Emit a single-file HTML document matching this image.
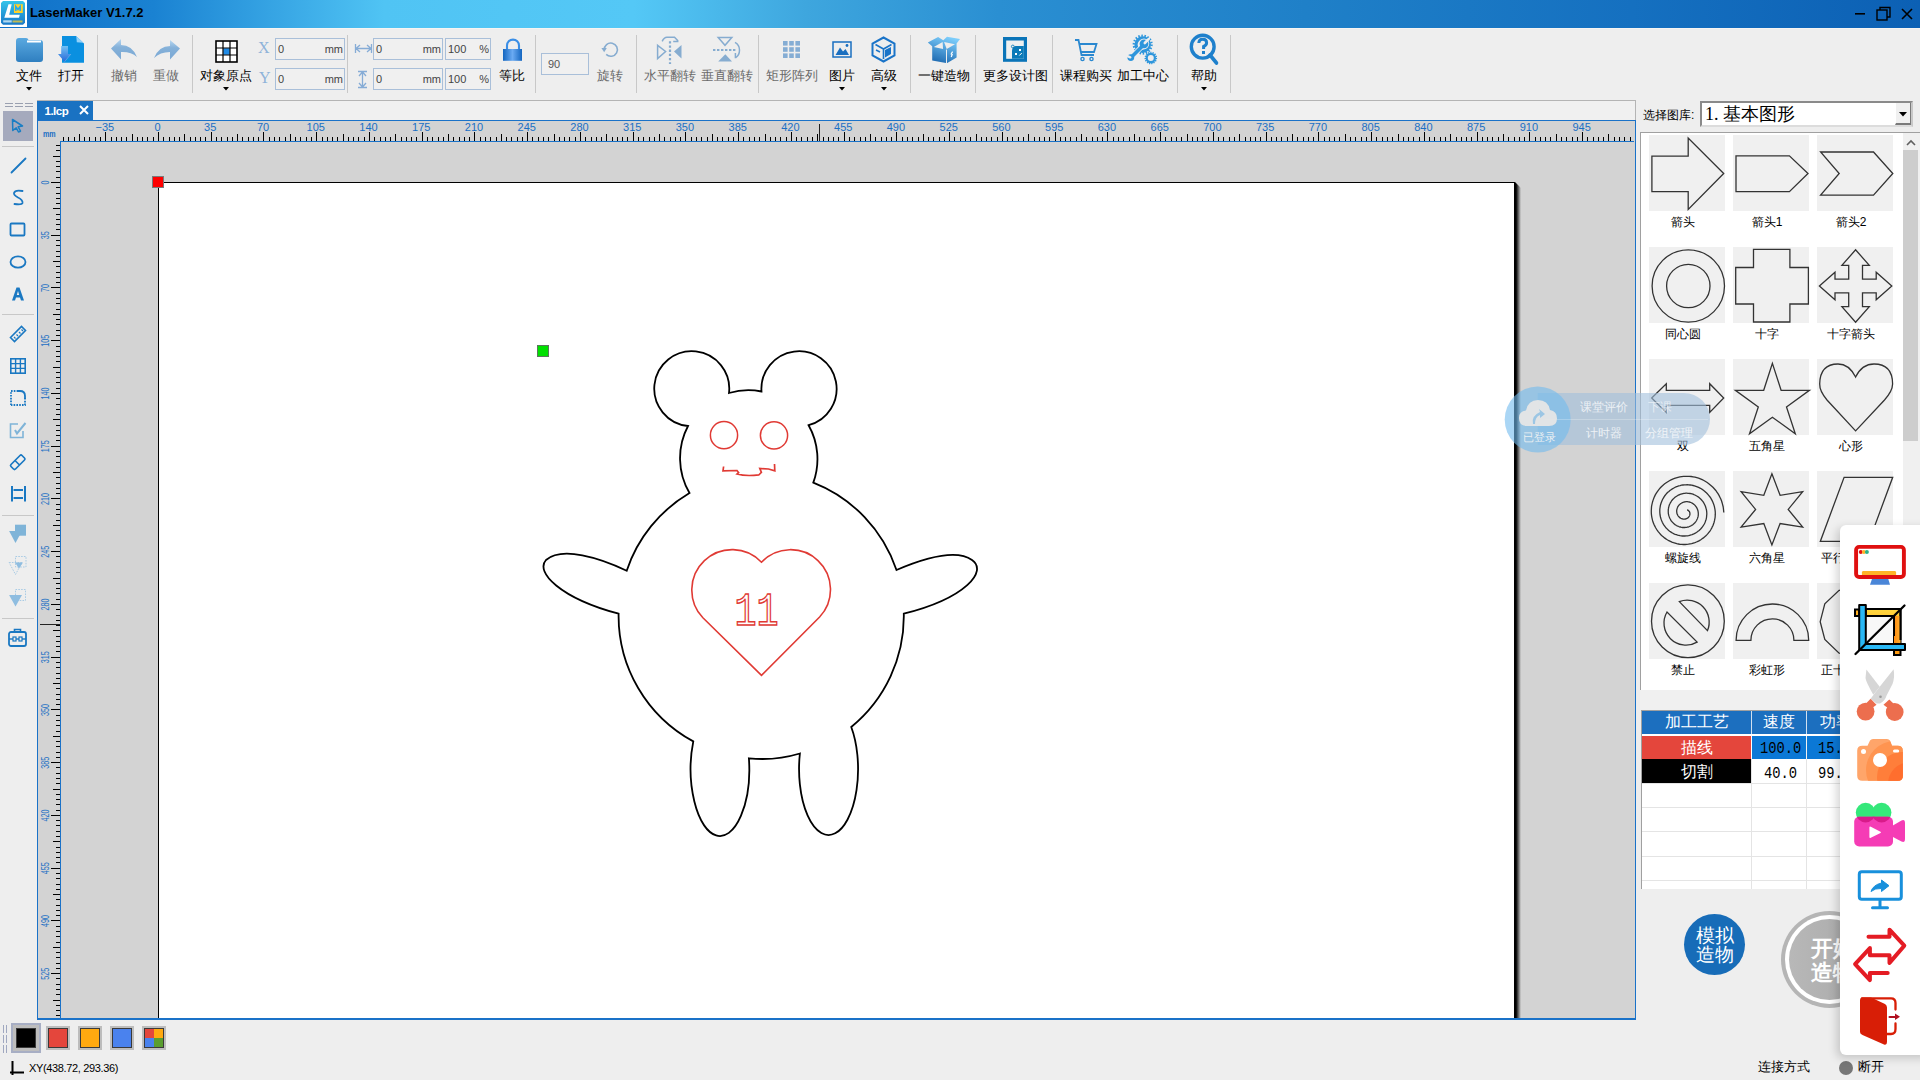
<!DOCTYPE html><html><head><meta charset="utf-8"><style>
*{margin:0;padding:0;box-sizing:border-box}
html,body{width:1920px;height:1080px;overflow:hidden;background:#eeeeee;font-family:"Liberation Sans",sans-serif;position:relative}
.abs{position:absolute}
.t{position:absolute;white-space:nowrap;font-size:13px;line-height:13px;color:#000}
svg{position:absolute;overflow:visible}
</style></head><body>
<div class="abs" style="left:0;top:0;width:1920px;height:28px;background:linear-gradient(90deg,#1070c8 0%,#1a82d2 8%,#50c4f4 20%,#54c8f6 33%,#3ea6de 42%,#2a8fd2 52%,#1f80c8 68%,#1570c0 85%,#0c60b4 100%)"></div>
<div class="abs" style="left:0;top:0;width:27px;height:27px;background:#fff"></div>
<svg style="left:0;top:0" width="27" height="27" viewBox="0 0 27 27">
<defs><linearGradient id="lg" x1="0" y1="0" x2="0" y2="1"><stop offset="0" stop-color="#34c4ea"/><stop offset="1" stop-color="#1878c8"/></linearGradient></defs>
<path d="M3 1 H23 L25 3 V22.7 L23 24.7 H3 L1 22.7 V3 Z" fill="url(#lg)"/>
<path d="M8.5 4.2 H11.7 L9.2 14.8 H19.8 L19 17.8 H4.3 Z" fill="#fff"/>
<rect x="14" y="4.2" width="8.8" height="8.8" fill="#ffd028"/>
<path d="M15.8 11 V6.5 L18 9.5 L20.2 6.5 V11" stroke="#22a8f0" stroke-width="1.5" fill="none"/>
<rect x="3.2" y="20.3" width="8.5" height="2.2" fill="#d8eef8" opacity="0.8"/><rect x="12.5" y="20.5" width="10" height="2" fill="#e8c838" opacity="0.8"/>
</svg>
<div class="t" style="left:30px;top:5px;font-size:13px;font-weight:bold;line-height:16px;color:#000;letter-spacing:0px">LaserMaker V1.7.2</div>
<svg style="left:1850px;top:6px" width="70" height="16" viewBox="0 0 70 16">
<rect x="5" y="7" width="10" height="1.6" fill="#000"/>
<rect x="27" y="4" width="10" height="10" fill="none" stroke="#000" stroke-width="1.4"/>
<path d="M30 4 V1.5 H40 V11 H37" fill="none" stroke="#000" stroke-width="1.4"/>
<path d="M52 3 L62 13 M62 3 L52 13" stroke="#000" stroke-width="1.6"/>
</svg>
<div class="abs" style="left:0;top:28px;width:1920px;height:1px;background:#f6f4f2"></div><div class="abs" style="left:97px;top:35px;width:1px;height:58px;background:#c8c8c8"></div><div class="abs" style="left:192px;top:35px;width:1px;height:58px;background:#c8c8c8"></div><div class="abs" style="left:347px;top:35px;width:1px;height:58px;background:#c8c8c8"></div><div class="abs" style="left:535px;top:35px;width:1px;height:58px;background:#c8c8c8"></div><div class="abs" style="left:636px;top:35px;width:1px;height:58px;background:#c8c8c8"></div><div class="abs" style="left:758px;top:35px;width:1px;height:58px;background:#c8c8c8"></div><div class="abs" style="left:910px;top:35px;width:1px;height:58px;background:#c8c8c8"></div><div class="abs" style="left:975px;top:35px;width:1px;height:58px;background:#c8c8c8"></div><div class="abs" style="left:1052px;top:35px;width:1px;height:58px;background:#c8c8c8"></div><div class="abs" style="left:1177px;top:35px;width:1px;height:58px;background:#c8c8c8"></div><div class="abs" style="left:1230px;top:35px;width:1px;height:58px;background:#c8c8c8"></div><div class="t" style="left:-31.0px;top:69px;width:120px;text-align:center;font-size:13px;line-height:13px;color:#000;">文件</div><svg style="left:25.5px;top:87px" width="6" height="4"><path d="M0 0 H6 L3 3.5 Z" fill="#000"/></svg><div class="t" style="left:11.0px;top:69px;width:120px;text-align:center;font-size:13px;line-height:13px;color:#000;">打开</div><div class="t" style="left:63.5px;top:69px;width:120px;text-align:center;font-size:13px;line-height:13px;color:#6a6a6a;">撤销</div><div class="t" style="left:106.0px;top:69px;width:120px;text-align:center;font-size:13px;line-height:13px;color:#6a6a6a;">重做</div><div class="t" style="left:166.0px;top:69px;width:120px;text-align:center;font-size:13px;line-height:13px;color:#000;">对象原点</div><svg style="left:222.5px;top:87px" width="6" height="4"><path d="M0 0 H6 L3 3.5 Z" fill="#000"/></svg><div class="t" style="left:452.0px;top:69px;width:120px;text-align:center;font-size:13px;line-height:13px;color:#000;">等比</div><div class="t" style="left:550.0px;top:69px;width:120px;text-align:center;font-size:13px;line-height:13px;color:#6a6a6a;">旋转</div><div class="t" style="left:609.5px;top:69px;width:120px;text-align:center;font-size:13px;line-height:13px;color:#6a6a6a;">水平翻转</div><div class="t" style="left:667.0px;top:69px;width:120px;text-align:center;font-size:13px;line-height:13px;color:#6a6a6a;">垂直翻转</div><div class="t" style="left:731.5px;top:69px;width:120px;text-align:center;font-size:13px;line-height:13px;color:#6a6a6a;">矩形阵列</div><div class="t" style="left:782.0px;top:69px;width:120px;text-align:center;font-size:13px;line-height:13px;color:#000;">图片</div><svg style="left:838.5px;top:87px" width="6" height="4"><path d="M0 0 H6 L3 3.5 Z" fill="#000"/></svg><div class="t" style="left:824.0px;top:69px;width:120px;text-align:center;font-size:13px;line-height:13px;color:#000;">高级</div><svg style="left:880.5px;top:87px" width="6" height="4"><path d="M0 0 H6 L3 3.5 Z" fill="#000"/></svg><div class="t" style="left:883.5px;top:69px;width:120px;text-align:center;font-size:13px;line-height:13px;color:#000;">一键造物</div><div class="t" style="left:955.0px;top:69px;width:120px;text-align:center;font-size:13px;line-height:13px;color:#000;">更多设计图</div><div class="t" style="left:1026.0px;top:69px;width:120px;text-align:center;font-size:13px;line-height:13px;color:#000;">课程购买</div><div class="t" style="left:1083.0px;top:69px;width:120px;text-align:center;font-size:13px;line-height:13px;color:#000;">加工中心</div><div class="t" style="left:1143.5px;top:69px;width:120px;text-align:center;font-size:13px;line-height:13px;color:#000;">帮助</div><svg style="left:1200.5px;top:87px" width="6" height="4"><path d="M0 0 H6 L3 3.5 Z" fill="#000"/></svg><svg style="left:15px;top:37px" width="29" height="26" viewBox="0 0 29 26">
<defs><linearGradient id="fg" x1="0" y1="0" x2="0" y2="1"><stop offset="0" stop-color="#5aa9e0"/><stop offset="1" stop-color="#2f7fc0"/></linearGradient></defs>
<path d="M1 4 Q1 1 4 1 H11 Q13 1 13.5 3 H25 Q28 3 28 6 V22 Q28 25 25 25 H4 Q1 25 1 22 Z" fill="url(#fg)"/>
<rect x="12" y="3.5" width="14" height="2" fill="#fff"/>
</svg><svg style="left:50px;top:30px" width="40" height="40" viewBox="0 0 40 40">
<defs><linearGradient id="oa" x1="0" y1="0" x2="0" y2="1"><stop offset="0" stop-color="#70c0f4"/><stop offset="1" stop-color="#2868d8"/></linearGradient></defs>
<path d="M12 5.9 H26 L34 13.5 V32.8 H12 Z" fill="#0a90e0"/>
<path d="M26.3 6.3 L26.8 12.3 L33.6 12.8 Z" fill="#92d2fa"/>
<path d="M11.2 16 H18 V24 H21 L14.5 31.8 L8 24 H11.2 Z" fill="url(#oa)"/>
<path d="M21 24 L14.5 31.8" stroke="#9ccdf2" stroke-width="0.6" opacity="0.7"/>
</svg><svg style="left:110px;top:38px" width="29" height="23" viewBox="0 0 29 23">
<defs><linearGradient id="ug" x1="0" y1="0" x2="0" y2="1"><stop offset="0" stop-color="#b8d8f2"/><stop offset="0.4" stop-color="#85b1d9"/><stop offset="1" stop-color="#7aa8d4"/></linearGradient></defs>
<path d="M1 10.5 L11 1 V7 Q22 7 27 19 Q21 13.5 11 14 V21.5 Z" fill="url(#ug)"/>
</svg>
<svg style="left:152px;top:38px" width="29" height="23" viewBox="0 0 29 23">
<path d="M28 10.5 L18 2 V8 Q7 8 2 20 Q8 14 18 14 V21.5 Z" fill="url(#ug)"/>
</svg><svg style="left:215px;top:40px" width="23" height="23" viewBox="0 0 23 23">
<rect x="1" y="1" width="21" height="21" fill="#fff" stroke="#000" stroke-width="1.6"/>
<rect x="8.2" y="8.2" width="6.6" height="6.6" fill="#1e8ae6"/>
<path d="M8 1 V22 M15 1 V22 M1 8 H22 M1 15 H22" stroke="#000" stroke-width="1.2"/>
</svg><div class="t" style="left:258px;top:40px;font-family:&quot;Liberation Serif&quot;,serif;font-size:16px;line-height:16px;color:#8fb3d9">X</div><div class="t" style="left:259px;top:70px;font-family:&quot;Liberation Serif&quot;,serif;font-size:16px;line-height:16px;color:#8fb3d9">Y</div><div class="abs" style="left:275px;top:38px;width:70px;height:22px;border:1px solid #a9bfd9;background:#f0f0f0"></div><div class="t" style="left:278px;top:44px;font-size:11px;line-height:11px;color:#444">0</div><div class="t" style="left:275px;width:68px;text-align:right;top:44px;font-size:11px;line-height:11px;color:#444">mm</div><div class="abs" style="left:275px;top:68px;width:70px;height:22px;border:1px solid #a9bfd9;background:#f0f0f0"></div><div class="t" style="left:278px;top:74px;font-size:11px;line-height:11px;color:#444">0</div><div class="t" style="left:275px;width:68px;text-align:right;top:74px;font-size:11px;line-height:11px;color:#444">mm</div><div class="abs" style="left:373px;top:38px;width:70px;height:22px;border:1px solid #a9bfd9;background:#f0f0f0"></div><div class="t" style="left:376px;top:44px;font-size:11px;line-height:11px;color:#444">0</div><div class="t" style="left:373px;width:68px;text-align:right;top:44px;font-size:11px;line-height:11px;color:#444">mm</div><div class="abs" style="left:373px;top:68px;width:70px;height:22px;border:1px solid #a9bfd9;background:#f0f0f0"></div><div class="t" style="left:376px;top:74px;font-size:11px;line-height:11px;color:#444">0</div><div class="t" style="left:373px;width:68px;text-align:right;top:74px;font-size:11px;line-height:11px;color:#444">mm</div><div class="abs" style="left:445px;top:38px;width:46px;height:22px;border:1px solid #a9bfd9;background:#f0f0f0"></div><div class="t" style="left:448px;top:44px;font-size:11px;line-height:11px;color:#444">100</div><div class="t" style="left:445px;width:44px;text-align:right;top:44px;font-size:11px;line-height:11px;color:#444">%</div><div class="abs" style="left:445px;top:68px;width:46px;height:22px;border:1px solid #a9bfd9;background:#f0f0f0"></div><div class="t" style="left:448px;top:74px;font-size:11px;line-height:11px;color:#444">100</div><div class="t" style="left:445px;width:44px;text-align:right;top:74px;font-size:11px;line-height:11px;color:#444">%</div><div class="abs" style="left:541px;top:53px;width:48px;height:22px;border:1px solid #a9bfd9;background:#f0f0f0"></div><div class="t" style="left:544px;top:59px;font-size:11px;line-height:11px;color:#444"></div><div class="t" style="left:548px;top:59px;font-size:11px;line-height:11px;color:#555">90</div><svg style="left:354px;top:43px" width="19" height="11" viewBox="0 0 19 11">
<path d="M1.5 1 V10 M17.5 1 V10 M2 5.5 H17 M2 5.5 L6 2 M2 5.5 L6 9 M17 5.5 L13 2 M17 5.5 L13 9" stroke="#86acd6" stroke-width="1.3" fill="none"/>
</svg>
<svg style="left:357px;top:70px" width="11" height="19" viewBox="0 0 11 19">
<path d="M1 1.5 H10 M1 17.5 H10 M5.5 2 V17 M5.5 2 L2 6 M5.5 2 L9 6 M5.5 17 L2 13 M5.5 17 L9 13" stroke="#86acd6" stroke-width="1.3" fill="none"/>
</svg><svg style="left:502px;top:38px" width="21" height="24" viewBox="0 0 21 24">
<defs><linearGradient id="lk" x1="0" y1="0" x2="1" y2="0"><stop offset="0" stop-color="#1466c0"/><stop offset="0.5" stop-color="#6aaaf2"/><stop offset="1" stop-color="#1466c0"/></linearGradient></defs>
<path d="M5 11.5 V7.6 A6 6 0 0 1 17 7.6 V11.5" stroke="#3a8ee6" stroke-width="2.1" fill="none"/>
<rect x="1" y="11" width="19" height="11.8" fill="url(#lk)"/>
</svg><svg style="left:600px;top:40px" width="20" height="18" viewBox="0 0 20 18">
<path d="M4.2 10 A6.6 6.6 0 1 1 6.2 14.4" stroke="#86acd0" stroke-width="1.6" fill="none"/>
<path d="M1.4 8 L6.8 8 L4.2 12.2 Z" fill="#86acd0"/>
</svg><svg style="left:650px;top:32px" width="100" height="36" viewBox="0 0 100 36">
<g stroke="#86acd0" fill="none" stroke-width="1.5">
<path d="M20 9.2 V32" stroke-width="2.2" stroke-dasharray="2.3 1.9"/>
<path d="M7.6 13.3 L15.6 19.5 L7.6 26.6 Z"/>
<path d="M12.2 9.4 Q14 5.2 17 5.2 H24.5 L27.7 8.6 V9.4 H23.2"/>
<path d="M63 18 H86" stroke-width="2.2" stroke-dasharray="2.4 1.6"/>
<path d="M68.2 5.5 H81.8 L75 13.3 Z"/>
<path d="M85 10.4 Q89.5 13 89.5 18 Q89.5 23 86 25.5 H85.4 V21"/>
</g>
<path d="M31.5 13 L24 19.5 L31.5 26.6 Z" fill="#86acd0"/>
<path d="M68.2 29.5 H82 L75.3 22.3 Z" fill="#86acd0"/>
</svg><svg style="left:783px;top:41px" width="18" height="18" viewBox="0 0 18 18" fill="#85add4">
<rect x="0" y="0" width="4.6" height="4.6"/><rect x="6.2" y="0" width="4.6" height="4.6"/><rect x="12.4" y="0" width="4.6" height="4.6"/>
<rect x="0" y="6.2" width="4.6" height="4.6"/><rect x="6.2" y="6.2" width="4.6" height="4.6"/><rect x="12.4" y="6.2" width="4.6" height="4.6"/>
<rect x="0" y="12.4" width="4.6" height="4.6"/><rect x="6.2" y="12.4" width="4.6" height="4.6"/><rect x="12.4" y="12.4" width="4.6" height="4.6"/>
</svg><svg style="left:832px;top:41px" width="20" height="17" viewBox="0 0 20 17">
<rect x="1" y="1" width="18" height="15" fill="none" stroke="#1a6fc0" stroke-width="1.5"/>
<path d="M3.5 14 L8 6.5 L11 10.5 L13.5 8 L17 14 Z" fill="#1a6fc0"/>
<circle cx="15" cy="4.5" r="1.4" fill="#1a6fc0"/>
</svg><svg style="left:871px;top:36px" width="25" height="27" viewBox="0 0 25 27">
<path d="M12.5 1.5 L23.5 7.5 V19.5 L12.5 25.5 L1.5 19.5 V7.5 Z" stroke="#1a74c8" stroke-width="2" fill="none"/>
<path d="M4.5 8.5 L12.5 13 L20.5 8.5 M12.5 13 V23" stroke="#1a74c8" stroke-width="1.6" fill="none"/>
<path d="M14 14 L20 11 V18 L14 21.5 Z" fill="#1a74c8"/>
<path d="M5 14 L9 16" stroke="#1a74c8" stroke-width="1.4"/>
</svg><svg style="left:920px;top:30px" width="50" height="40" viewBox="0 0 50 40">
<defs><linearGradient id="bx" x1="0.6" y1="0" x2="0.2" y2="1"><stop offset="0" stop-color="#7ccdfb"/><stop offset="1" stop-color="#1a66ae"/></linearGradient></defs>
<path d="M7.8 12.4 L18.1 6.9 L23.3 10.3 L27 6.7 L40 9 L36.6 13.6 V27.5 L27.3 33 L26 33 L12.2 30.6 V16.2 Z" fill="url(#bx)"/>
<path d="M13.8 17.1 L22.6 12 L23.1 18.9 Z" fill="#eeeeee"/>
<path d="M24.1 12 L35 14.3 L26.7 19.1 Z" fill="#eeeeee"/>
<path d="M26.5 19.6 V33.5" stroke="#eeeeee" stroke-width="1"/>
<path d="M32.6 21.6 L31.2 24 L32.2 24.6 L31.2 27" stroke="#fff" stroke-width="1.2" fill="none"/>
</svg><svg style="left:998px;top:32px" width="34" height="34" viewBox="0 0 34 34">
<rect x="5" y="5" width="24" height="24.8" fill="#0a74b8"/>
<rect x="8.2" y="8.5" width="17.6" height="18.3" fill="#eef0f0"/>
<path d="M17.5 14 H25.8 V26.8 H14 V19 Q14 15.2 17.5 14 Z" fill="#0b7ab8"/>
<circle cx="14.8" cy="14.5" r="1.4" fill="none" stroke="#0b7ab8" stroke-width="0.9"/>
<rect x="21" y="17" width="2" height="2" fill="#fff"/><rect x="17" y="21" width="2" height="2" fill="#fff"/>
<path d="M21.3 23.5 L23.8 21" stroke="#fff" stroke-width="1"/>
</svg><svg style="left:1074px;top:38px" width="24" height="24" viewBox="0 0 24 24">
<path d="M1 2 H4.5 L7.5 17 H20" stroke="#2a88d0" stroke-width="1.8" fill="none"/>
<path d="M5 6 H22.5 L20 14 H7" stroke="#2a88d0" stroke-width="1.8" fill="none"/>
<circle cx="8.5" cy="21" r="1.6" stroke="#2a88d0" stroke-width="1.4" fill="none"/>
<circle cx="17.5" cy="21" r="1.6" stroke="#2a88d0" stroke-width="1.4" fill="none"/>
</svg><svg style="left:1120px;top:30px" width="45" height="40" viewBox="0 0 45 40">
<circle cx="22.7" cy="14.6" r="8.9" stroke="#2e96dc" stroke-width="2.3" stroke-dasharray="1.5 1.6" fill="none"/>
<circle cx="22.7" cy="14.6" r="6.7" stroke="#2e96dc" stroke-width="3.2" fill="none"/>
<g stroke="#eeeeee" stroke-width="1.6" fill="#eeeeee">
<path d="M22.5 16 L11.3 27.2" stroke-width="5.2" stroke-linecap="round"/>
<circle cx="24" cy="13.8" r="5.2" stroke="none"/>
</g>
<path d="M22.5 16 L11.3 27.2" stroke="#2e96dc" stroke-width="3.6" stroke-linecap="round"/>
<circle cx="24" cy="13.8" r="4.4" fill="#2e96dc"/>
<circle cx="10.8" cy="27.6" r="3.4" fill="#2e96dc"/>
<path d="M24.8 13 L28.6 9.2" stroke="#eeeeee" stroke-width="2.6" stroke-linecap="round"/>
<path d="M10.3 27.3 L6.4 25.6" stroke="#eeeeee" stroke-width="2.4" stroke-linecap="round"/>
<circle cx="30.8" cy="28" r="5.5" stroke="#2e96dc" stroke-width="1.6" stroke-dasharray="1.2 1.05" fill="none"/>
<circle cx="30.8" cy="28" r="4.1" stroke="#2e96dc" stroke-width="2.2" fill="none"/>
</svg><svg style="left:1189px;top:33px" width="30" height="34" viewBox="0 0 30 34">
<circle cx="13.7" cy="13.7" r="11.4" stroke="#1e80cc" stroke-width="3.4" fill="none"/>
<path d="M21 22 L27.5 30" stroke="#1e80cc" stroke-width="3.6" stroke-linecap="round"/>
<path d="M9.8 10 Q10 6.3 13.8 6.3 Q17.6 6.3 17.6 9.8 Q17.6 12.4 14.6 13.5 V16" stroke="#1e80cc" stroke-width="3" fill="none"/>
<rect x="13" y="18" width="3" height="3" fill="#1e80cc"/>
</svg><svg style="left:5px;top:103px" width="29" height="5" viewBox="0 0 29 5"><path d="M0 0.5 H8 M10 0.5 H18 M20 0.5 H28 M0 3.5 H8 M10 3.5 H18 M20 3.5 H28" stroke="#9aa0b0" stroke-width="1"/></svg><div class="abs" style="left:3px;top:111px;width:30px;height:30px;background:#a5aabd"></div><svg style="left:11px;top:118px" width="13" height="15" viewBox="0 0 13 15"><path d="M1.5 1.5 L11.5 8 L7.2 8.8 L9.5 13.2 L7.5 14 L5.2 9.8 L1.8 12.5 Z" stroke="#1a7ec4" stroke-width="1.5" fill="none" stroke-linejoin="round"/></svg><div class="abs" style="left:2px;top:146px;width:32px;height:1px;background:#c8c8c8"></div><div class="abs" style="left:2px;top:314px;width:32px;height:1px;background:#c8c8c8"></div><div class="abs" style="left:2px;top:515px;width:32px;height:1px;background:#c8c8c8"></div><div class="abs" style="left:2px;top:618px;width:32px;height:1px;background:#c8c8c8"></div><svg style="left:10px;top:157px" width="17" height="17" viewBox="0 0 17 17"><path d="M1.5 15.5 L15.5 1.5" stroke="#1a78c2" stroke-width="1.8" stroke-linecap="round"/></svg><svg style="left:12px;top:189px" width="13" height="17" viewBox="0 0 13 17"><path d="M10.5 2 Q3 0.5 2 4 Q1.5 6 6 8.5 Q11 11 10.5 14 Q10 16 2.5 15" stroke="#1a78c2" stroke-width="1.8" fill="none" stroke-linecap="round"/></svg><svg style="left:9px;top:222px" width="17" height="15" viewBox="0 0 17 15"><rect x="1.5" y="1.5" width="14" height="12" rx="1" stroke="#1a78c2" stroke-width="1.8" fill="none"/></svg><svg style="left:9px;top:255px" width="18" height="14" viewBox="0 0 18 14"><ellipse cx="9" cy="7" rx="7.5" ry="5.7" stroke="#1a78c2" stroke-width="1.8" fill="none"/></svg><svg style="left:11px;top:287px" width="14" height="14" viewBox="0 0 14 14"><path d="M1 13.5 L5.5 0.5 H8.5 L13 13.5 H10 L9 10.5 H5 L4 13.5 Z M5.8 8 H8.2 L7 4 Z" fill="#1a78c2" fill-rule="evenodd"/></svg><svg style="left:9px;top:325px" width="18" height="18" viewBox="0 0 18 18"><path d="M1.5 12.5 L12.5 1.5 L16.5 5.5 L5.5 16.5 Z" stroke="#1a78c2" stroke-width="1.6" fill="none"/><path d="M5 12 L6.5 13.5 M7.5 9.5 L9 11 M10 7 L11.5 8.5 M12.5 4.5 L14 6" stroke="#1a78c2" stroke-width="1.2"/></svg><svg style="left:10px;top:358px" width="16" height="16" viewBox="0 0 16 16"><rect x="0.8" y="0.8" width="14.4" height="14.4" stroke="#1a78c2" stroke-width="1.6" fill="none"/><path d="M5.6 1 V15 M10.4 1 V15 M1 5.6 H15 M1 10.4 H15" stroke="#1a78c2" stroke-width="1.4"/></svg><svg style="left:10px;top:390px" width="16" height="16" viewBox="0 0 16 16"><path d="M1 15 V1 H8 M15 8 V15 H1" stroke="#1a78c2" stroke-width="1.8" fill="none" stroke-dasharray="1.6 1.2"/><path d="M7 1 H10 Q15 1 15 6 V9" stroke="#1a78c2" stroke-width="1.8" fill="none"/></svg><svg style="left:9px;top:421px" width="18" height="18" viewBox="0 0 18 18"><path d="M9 3 H1.5 V16.5 H14 V10" stroke="#7fb4d8" stroke-width="1.6" fill="none"/><path d="M6 9 L8 12.5 L16.5 2" stroke="#7fb4d8" stroke-width="2" fill="none"/></svg><svg style="left:9px;top:453px" width="18" height="18" viewBox="0 0 18 18"><path d="M2 11.5 L11 2.5 Q12 1.5 13 2.5 L15.5 5 Q16.5 6 15.5 7 L6.5 16 Q5.5 17 4.5 16 L2 13.5 Q1 12.5 2 11.5 Z M6 7.5 L10.5 12" stroke="#1a78c2" stroke-width="1.7" fill="none"/></svg><svg style="left:10px;top:485px" width="16" height="17" viewBox="0 0 16 17"><path d="M2 1 V16.5 M15 1 V16.5" stroke="#1a78c2" stroke-width="2"/><path d="M3.5 5 H13 M3.5 13 H13" stroke="#1a78c2" stroke-width="2"/></svg><svg style="left:8px;top:524px" width="20" height="21" viewBox="0 0 20 21"><rect x="7" y="0.7" width="11" height="11" fill="#7fb4d8"/><path d="M1.1 7 H14 L7.5 19 Z" fill="#7fb4d8"/></svg><svg style="left:8px;top:555px" width="20" height="21" viewBox="0 0 20 21"><rect x="7.5" y="1.5" width="10.5" height="10.5" stroke="#a9cbe4" stroke-width="1" fill="none" stroke-dasharray="1.6 1.2"/><path d="M1.1 7.5 H14 L7.5 19.5 Z" stroke="#a9cbe4" stroke-width="1" fill="none" stroke-dasharray="1.6 1.2"/><path d="M7 7.5 H15 L11 13.5 Z" fill="#8fbde0"/></svg><svg style="left:8px;top:588px" width="20" height="20" viewBox="0 0 20 20"><rect x="7.5" y="1.5" width="10" height="11" stroke="#a9cbe4" stroke-width="1" fill="none" stroke-dasharray="1.6 1.2"/><path d="M1.1 7 H14 L7.5 18.5 Z" fill="#8fbde0"/></svg><svg style="left:8px;top:628px" width="19" height="19" viewBox="0 0 19 19"><rect x="1" y="4" width="17" height="14" rx="2" stroke="#1a78c2" stroke-width="1.8" fill="none"/><path d="M6.5 4 V1.5 H12.5 V4" stroke="#1a78c2" stroke-width="1.6" fill="none"/><path d="M1 11 H18" stroke="#1a78c2" stroke-width="1.4"/><rect x="5" y="9" width="3" height="4" fill="#eee" stroke="#1a78c2" stroke-width="1.2"/><rect x="11" y="9" width="3" height="4" fill="#eee" stroke="#1a78c2" stroke-width="1.2"/></svg><div class="abs" style="left:37px;top:100px;width:1599px;height:20px;background:#f0f0f0;border-top:1px solid #b4b4b4;border-right:1px solid #b4b4b4"></div><div class="abs" style="left:37px;top:101px;width:56px;height:20px;background:#1a72c2"></div><div class="t" style="left:44.5px;top:106px;font-size:11.5px;line-height:11px;color:#fff;letter-spacing:-0.5px;font-weight:bold">1.lcp</div><svg style="left:79px;top:105px" width="10" height="10" viewBox="0 0 10 10"><path d="M1 1 L9 9 M9 1 L1 9" stroke="#fff" stroke-width="2"/></svg><div class="abs" style="left:37px;top:120px;width:1599px;height:900px;background:#d3d3d3;border:1px solid #1a72c8;border-bottom-width:2px"></div><div class="abs" style="left:60px;top:141px;width:1574px;height:1px;background:#1a72c8"></div><div class="abs" style="left:60px;top:141px;width:1px;height:878px;background:#1a72c8"></div><div class="t" style="left:42.5px;top:129px;font-size:9.5px;line-height:9px;color:#1a6fc4;transform:scaleX(0.75);transform-origin:0 0;font-weight:bold">mm</div><svg style="left:0;top:0" width="1920" height="1080" viewBox="0 0 1920 1080"><path d="M63.5 137V141M68.5 137V141M74.5 137V141M79.5 134V141M84.5 137V141M89.5 137V141M95.5 137V141M100.5 137V141M105.5 132V141M111.5 137V141M116.5 137V141M121.5 137V141M126.5 137V141M132.5 134V141M137.5 137V141M142.5 137V141M147.5 137V141M153.5 137V141M158.5 132V141M163.5 137V141M169.5 137V141M174.5 137V141M179.5 137V141M184.5 134V141M190.5 137V141M195.5 137V141M200.5 137V141M205.5 137V141M211.5 132V141M216.5 137V141M221.5 137V141M227.5 137V141M232.5 137V141M237.5 134V141M242.5 137V141M248.5 137V141M253.5 137V141M258.5 137V141M263.5 132V141M269.5 137V141M274.5 137V141M279.5 137V141M285.5 137V141M290.5 134V141M295.5 137V141M300.5 137V141M306.5 137V141M311.5 137V141M316.5 132V141M322.5 137V141M327.5 137V141M332.5 137V141M337.5 137V141M343.5 134V141M348.5 137V141M353.5 137V141M358.5 137V141M364.5 137V141M369.5 132V141M374.5 137V141M380.5 137V141M385.5 137V141M390.5 137V141M395.5 134V141M401.5 137V141M406.5 137V141M411.5 137V141M416.5 137V141M422.5 132V141M427.5 137V141M432.5 137V141M438.5 137V141M443.5 137V141M448.5 134V141M453.5 137V141M459.5 137V141M464.5 137V141M469.5 137V141M474.5 132V141M480.5 137V141M485.5 137V141M490.5 137V141M496.5 137V141M501.5 134V141M506.5 137V141M511.5 137V141M517.5 137V141M522.5 137V141M527.5 132V141M532.5 137V141M538.5 137V141M543.5 137V141M548.5 137V141M554.5 134V141M559.5 137V141M564.5 137V141M569.5 137V141M575.5 137V141M580.5 132V141M585.5 137V141M591.5 137V141M596.5 137V141M601.5 137V141M606.5 134V141M612.5 137V141M617.5 137V141M622.5 137V141M627.5 137V141M633.5 132V141M638.5 137V141M643.5 137V141M649.5 137V141M654.5 137V141M659.5 134V141M664.5 137V141M670.5 137V141M675.5 137V141M680.5 137V141M685.5 132V141M691.5 137V141M696.5 137V141M701.5 137V141M707.5 137V141M712.5 134V141M717.5 137V141M722.5 137V141M728.5 137V141M733.5 137V141M738.5 132V141M743.5 137V141M749.5 137V141M754.5 137V141M759.5 137V141M765.5 134V141M770.5 137V141M775.5 137V141M780.5 137V141M786.5 137V141M791.5 132V141M796.5 137V141M801.5 137V141M807.5 137V141M812.5 137V141M817.5 134V141M823.5 137V141M828.5 137V141M833.5 137V141M838.5 137V141M844.5 132V141M849.5 137V141M854.5 137V141M860.5 137V141M865.5 137V141M870.5 134V141M875.5 137V141M881.5 137V141M886.5 137V141M891.5 137V141M896.5 132V141M902.5 137V141M907.5 137V141M912.5 137V141M918.5 137V141M923.5 134V141M928.5 137V141M933.5 137V141M939.5 137V141M944.5 137V141M949.5 132V141M954.5 137V141M960.5 137V141M965.5 137V141M970.5 137V141M976.5 134V141M981.5 137V141M986.5 137V141M991.5 137V141M997.5 137V141M1002.5 132V141M1007.5 137V141M1012.5 137V141M1018.5 137V141M1023.5 137V141M1028.5 134V141M1034.5 137V141M1039.5 137V141M1044.5 137V141M1049.5 137V141M1055.5 132V141M1060.5 137V141M1065.5 137V141M1070.5 137V141M1076.5 137V141M1081.5 134V141M1086.5 137V141M1092.5 137V141M1097.5 137V141M1102.5 137V141M1107.5 132V141M1113.5 137V141M1118.5 137V141M1123.5 137V141M1129.5 137V141M1134.5 134V141M1139.5 137V141M1144.5 137V141M1150.5 137V141M1155.5 137V141M1160.5 132V141M1165.5 137V141M1171.5 137V141M1176.5 137V141M1181.5 137V141M1187.5 134V141M1192.5 137V141M1197.5 137V141M1202.5 137V141M1208.5 137V141M1213.5 132V141M1218.5 137V141M1223.5 137V141M1229.5 137V141M1234.5 137V141M1239.5 134V141M1245.5 137V141M1250.5 137V141M1255.5 137V141M1260.5 137V141M1266.5 132V141M1271.5 137V141M1276.5 137V141M1281.5 137V141M1287.5 137V141M1292.5 134V141M1297.5 137V141M1303.5 137V141M1308.5 137V141M1313.5 137V141M1318.5 132V141M1324.5 137V141M1329.5 137V141M1334.5 137V141M1339.5 137V141M1345.5 134V141M1350.5 137V141M1355.5 137V141M1361.5 137V141M1366.5 137V141M1371.5 132V141M1376.5 137V141M1382.5 137V141M1387.5 137V141M1392.5 137V141M1398.5 134V141M1403.5 137V141M1408.5 137V141M1413.5 137V141M1419.5 137V141M1424.5 132V141M1429.5 137V141M1434.5 137V141M1440.5 137V141M1445.5 137V141M1450.5 134V141M1456.5 137V141M1461.5 137V141M1466.5 137V141M1471.5 137V141M1477.5 132V141M1482.5 137V141M1487.5 137V141M1492.5 137V141M1498.5 137V141M1503.5 134V141M1508.5 137V141M1514.5 137V141M1519.5 137V141M1524.5 137V141M1529.5 132V141M1535.5 137V141M1540.5 137V141M1545.5 137V141M1550.5 137V141M1556.5 134V141M1561.5 137V141M1566.5 137V141M1572.5 137V141M1577.5 137V141M1582.5 132V141M1587.5 137V141M1593.5 137V141M1598.5 137V141M1603.5 137V141M1608.5 134V141M1614.5 137V141M1619.5 137V141M1624.5 137V141M1630.5 137V141M56 145.5H60M56 150.5H60M53 156.5H60M56 161.5H60M56 166.5H60M56 171.5H60M56 177.5H60M51 182.5H60M56 187.5H60M56 193.5H60M56 198.5H60M56 203.5H60M53 208.5H60M56 214.5H60M56 219.5H60M56 224.5H60M56 229.5H60M51 235.5H60M56 240.5H60M56 245.5H60M56 251.5H60M56 256.5H60M53 261.5H60M56 266.5H60M56 272.5H60M56 277.5H60M56 282.5H60M51 287.5H60M56 293.5H60M56 298.5H60M56 303.5H60M56 309.5H60M53 314.5H60M56 319.5H60M56 324.5H60M56 330.5H60M56 335.5H60M51 340.5H60M56 346.5H60M56 351.5H60M56 356.5H60M56 361.5H60M53 367.5H60M56 372.5H60M56 377.5H60M56 382.5H60M56 388.5H60M51 393.5H60M56 398.5H60M56 404.5H60M56 409.5H60M56 414.5H60M53 419.5H60M56 425.5H60M56 430.5H60M56 435.5H60M56 440.5H60M51 446.5H60M56 451.5H60M56 456.5H60M56 462.5H60M56 467.5H60M53 472.5H60M56 477.5H60M56 483.5H60M56 488.5H60M56 493.5H60M51 498.5H60M56 504.5H60M56 509.5H60M56 514.5H60M56 520.5H60M53 525.5H60M56 530.5H60M56 535.5H60M56 541.5H60M56 546.5H60M51 551.5H60M56 556.5H60M56 562.5H60M56 567.5H60M56 572.5H60M53 578.5H60M56 583.5H60M56 588.5H60M56 593.5H60M56 599.5H60M51 604.5H60M56 609.5H60M56 615.5H60M56 620.5H60M56 625.5H60M53 630.5H60M56 636.5H60M56 641.5H60M56 646.5H60M56 651.5H60M51 657.5H60M56 662.5H60M56 667.5H60M56 673.5H60M56 678.5H60M53 683.5H60M56 688.5H60M56 694.5H60M56 699.5H60M56 704.5H60M51 709.5H60M56 715.5H60M56 720.5H60M56 725.5H60M56 731.5H60M53 736.5H60M56 741.5H60M56 746.5H60M56 752.5H60M56 757.5H60M51 762.5H60M56 767.5H60M56 773.5H60M56 778.5H60M56 783.5H60M53 789.5H60M56 794.5H60M56 799.5H60M56 804.5H60M56 810.5H60M51 815.5H60M56 820.5H60M56 825.5H60M56 831.5H60M56 836.5H60M53 841.5H60M56 847.5H60M56 852.5H60M56 857.5H60M56 862.5H60M51 868.5H60M56 873.5H60M56 878.5H60M56 884.5H60M56 889.5H60M53 894.5H60M56 899.5H60M56 905.5H60M56 910.5H60M56 915.5H60M51 920.5H60M56 926.5H60M56 931.5H60M56 936.5H60M56 942.5H60M53 947.5H60M56 952.5H60M56 957.5H60M56 963.5H60M56 968.5H60M51 973.5H60M56 978.5H60M56 984.5H60M56 989.5H60M56 994.5H60M53 1000.5H60M56 1005.5H60M56 1010.5H60M56 1015.5H60" stroke="#000" stroke-width="1"/><path d="M819.5 124V141M40 624.5H60" stroke="#222" stroke-width="1"/><g font-family="Liberation Sans" font-size="11" fill="#1a6fc4" text-anchor="middle"><text x="104.8" y="131">−35</text><text x="157.5" y="131">0</text><text x="210.2" y="131">35</text><text x="263.0" y="131">70</text><text x="315.7" y="131">105</text><text x="368.5" y="131">140</text><text x="421.2" y="131">175</text><text x="474.0" y="131">210</text><text x="526.7" y="131">245</text><text x="579.5" y="131">280</text><text x="632.2" y="131">315</text><text x="684.9" y="131">350</text><text x="737.7" y="131">385</text><text x="790.4" y="131">420</text><text x="843.2" y="131">455</text><text x="895.9" y="131">490</text><text x="948.7" y="131">525</text><text x="1001.4" y="131">560</text><text x="1054.2" y="131">595</text><text x="1106.9" y="131">630</text><text x="1159.7" y="131">665</text><text x="1212.4" y="131">700</text><text x="1265.1" y="131">735</text><text x="1317.9" y="131">770</text><text x="1370.6" y="131">805</text><text x="1423.4" y="131">840</text><text x="1476.1" y="131">875</text><text x="1528.9" y="131">910</text><text x="1581.6" y="131">945</text><text transform="translate(49,182.5) rotate(-90) scale(0.72,1)" x="0" y="0" font-size="10">0</text><text transform="translate(49,235.2) rotate(-90) scale(0.72,1)" x="0" y="0" font-size="10">35</text><text transform="translate(49,288.0) rotate(-90) scale(0.72,1)" x="0" y="0" font-size="10">70</text><text transform="translate(49,340.7) rotate(-90) scale(0.72,1)" x="0" y="0" font-size="10">105</text><text transform="translate(49,393.5) rotate(-90) scale(0.72,1)" x="0" y="0" font-size="10">140</text><text transform="translate(49,446.2) rotate(-90) scale(0.72,1)" x="0" y="0" font-size="10">175</text><text transform="translate(49,499.0) rotate(-90) scale(0.72,1)" x="0" y="0" font-size="10">210</text><text transform="translate(49,551.7) rotate(-90) scale(0.72,1)" x="0" y="0" font-size="10">245</text><text transform="translate(49,604.5) rotate(-90) scale(0.72,1)" x="0" y="0" font-size="10">280</text><text transform="translate(49,657.2) rotate(-90) scale(0.72,1)" x="0" y="0" font-size="10">315</text><text transform="translate(49,709.9) rotate(-90) scale(0.72,1)" x="0" y="0" font-size="10">350</text><text transform="translate(49,762.7) rotate(-90) scale(0.72,1)" x="0" y="0" font-size="10">385</text><text transform="translate(49,815.4) rotate(-90) scale(0.72,1)" x="0" y="0" font-size="10">420</text><text transform="translate(49,868.2) rotate(-90) scale(0.72,1)" x="0" y="0" font-size="10">455</text><text transform="translate(49,920.9) rotate(-90) scale(0.72,1)" x="0" y="0" font-size="10">490</text><text transform="translate(49,973.7) rotate(-90) scale(0.72,1)" x="0" y="0" font-size="10">525</text></g></svg><div class="abs" style="left:158px;top:182px;width:1356px;height:836px;background:#fff;border-top:1px solid #000;border-left:1px solid #000"></div><svg style="left:1514px;top:182px" width="8" height="836" viewBox="0 0 8 836"><defs><linearGradient id="shd" x1="0" y1="0" x2="1" y2="0"><stop offset="0" stop-color="#000"/><stop offset="0.3" stop-color="#000"/><stop offset="1" stop-color="#d3d3d3"/></linearGradient></defs><path d="M0 0 H1 L7 6 V836 H0 Z" fill="url(#shd)"/></svg><div class="abs" style="left:152px;top:176px;width:12px;height:12px;background:#ff0000;border:1px solid #7a7a7a"></div><div class="abs" style="left:537px;top:345px;width:12px;height:12px;background:#00e000;border:1px solid #5a7a5a"></div><svg style="left:0;top:0" width="1920" height="1080" viewBox="0 0 1920 1080"><path d="M689.5 493 A69 69 0 0 1 688 426 A37.5 37.5 0 1 1 729 393 A69 69 0 0 1 761.5 391.5 A37.6 37.6 0 1 1 808.6 425.2 A69 69 0 0 1 813.3 482.6 A143 143 0 0 1 896.5 570 C920 560 955 548 972 560 C988 571 966 598 903.8 613.7 A143 143 0 0 1 851.25 727 A29.5 65.9 0 1 1 799.9 753.5 Q775 761 748.9 758.3 A29.3 66.95 0 1 1 693.3 741.4 A143 143 0 0 1 618.6 613.7 C560 598 535 572 546 560 C562 546 600 558 626.7 570.7 A143 143 0 0 1 689.5 493 Z" fill="none" stroke="#000" stroke-width="1.8"/><circle cx="724" cy="435.2" r="13.6" fill="none" stroke="#e03a34" stroke-width="1.5"/><circle cx="774" cy="435.4" r="13.6" fill="none" stroke="#e03a34" stroke-width="1.5"/><path d="M723.6 466.5 L723 470.8 L737 470.5 L738.6 472.6 L737 474 Q746 476.5 759 474.8 L761.4 472.4 L759.8 468.5 L768.5 469 L774.8 470.8 L774.5 464" fill="none" stroke="#e03a34" stroke-width="1.7"/><path d="M761.5 675.4 L702.9 617.8 A39.6 39.6 0 0 1 761.5 562.2 A39.6 39.6 0 0 1 819.6 617 Z" fill="none" stroke="#e03a34" stroke-width="1.6"/><text transform="translate(756.5,624.5) scale(0.8,1)" x="0" y="0" font-family="Liberation Mono" font-size="46" text-anchor="middle" fill="none" stroke="#e03a34" stroke-width="1.5">11</text></svg><div class="t" style="left:1643px;top:109px;font-size:12px;line-height:12px">选择图库:</div><div class="abs" style="left:1700px;top:101px;width:213px;height:26px;background:#fff;border:2px solid #8a8a8a;border-right-color:#c8c8c8;border-bottom-color:#dcdcdc"></div><div class="abs" style="left:1895px;top:103px;width:16px;height:22px;background:#f0f0f0;border-left:1px solid #fff;border-bottom:2px solid #7a7a7a;border-right:1px solid #7a7a7a"></div><svg style="left:1899px;top:112px" width="8" height="5"><path d="M0 0H8L4 4.5Z" fill="#000"/></svg><div class="t" style="left:1705px;top:104px;font-family:&quot;Liberation Serif&quot;,serif;font-size:18px;line-height:20px;color:#000">1. 基本图形</div><div class="abs" style="left:1640px;top:132px;width:280px;height:558px;background:#fff;border-left:1px solid #a0a0a0;border-top:1px solid #a0a0a0"></div><div class="abs" style="left:1903px;top:133px;width:17px;height:557px;background:#f0f0f0"></div><div class="abs" style="left:1903px;top:150px;width:15px;height:291px;background:#cdcdcd"></div><svg style="left:1906px;top:139px" width="10" height="7"><path d="M1 6 L5 2 L9 6" stroke="#606060" stroke-width="1.6" fill="none"/></svg><div class="abs" style="left:1649px;top:135px;width:76px;height:76px;background:#f0f0f0"></div><div class="t" style="left:1633px;top:216px;width:100px;text-align:center;font-size:12px;line-height:12px">箭头</div><div class="abs" style="left:1733px;top:135px;width:76px;height:76px;background:#f0f0f0"></div><div class="t" style="left:1717px;top:216px;width:100px;text-align:center;font-size:12px;line-height:12px">箭头1</div><div class="abs" style="left:1817px;top:135px;width:76px;height:76px;background:#f0f0f0"></div><div class="t" style="left:1801px;top:216px;width:100px;text-align:center;font-size:12px;line-height:12px">箭头2</div><div class="abs" style="left:1649px;top:247px;width:76px;height:76px;background:#f0f0f0"></div><div class="t" style="left:1633px;top:328px;width:100px;text-align:center;font-size:12px;line-height:12px">同心圆</div><div class="abs" style="left:1733px;top:247px;width:76px;height:76px;background:#f0f0f0"></div><div class="t" style="left:1717px;top:328px;width:100px;text-align:center;font-size:12px;line-height:12px">十字</div><div class="abs" style="left:1817px;top:247px;width:76px;height:76px;background:#f0f0f0"></div><div class="t" style="left:1801px;top:328px;width:100px;text-align:center;font-size:12px;line-height:12px">十字箭头</div><div class="abs" style="left:1649px;top:359px;width:76px;height:76px;background:#f0f0f0"></div><div class="t" style="left:1633px;top:440px;width:100px;text-align:center;font-size:12px;line-height:12px">双</div><div class="abs" style="left:1733px;top:359px;width:76px;height:76px;background:#f0f0f0"></div><div class="t" style="left:1717px;top:440px;width:100px;text-align:center;font-size:12px;line-height:12px">五角星</div><div class="abs" style="left:1817px;top:359px;width:76px;height:76px;background:#f0f0f0"></div><div class="t" style="left:1801px;top:440px;width:100px;text-align:center;font-size:12px;line-height:12px">心形</div><div class="abs" style="left:1649px;top:471px;width:76px;height:76px;background:#f0f0f0"></div><div class="t" style="left:1633px;top:552px;width:100px;text-align:center;font-size:12px;line-height:12px">螺旋线</div><div class="abs" style="left:1733px;top:471px;width:76px;height:76px;background:#f0f0f0"></div><div class="t" style="left:1717px;top:552px;width:100px;text-align:center;font-size:12px;line-height:12px">六角星</div><div class="abs" style="left:1817px;top:471px;width:76px;height:76px;background:#f0f0f0"></div><div class="t" style="left:1801px;top:552px;width:100px;text-align:center;font-size:12px;line-height:12px">平行四边形</div><div class="abs" style="left:1649px;top:583px;width:76px;height:76px;background:#f0f0f0"></div><div class="t" style="left:1633px;top:664px;width:100px;text-align:center;font-size:12px;line-height:12px">禁止</div><div class="abs" style="left:1733px;top:583px;width:76px;height:76px;background:#f0f0f0"></div><div class="t" style="left:1717px;top:664px;width:100px;text-align:center;font-size:12px;line-height:12px">彩虹形</div><div class="abs" style="left:1817px;top:583px;width:76px;height:76px;background:#f0f0f0"></div><div class="t" style="left:1801px;top:664px;width:100px;text-align:center;font-size:12px;line-height:12px">正十二边形</div><svg style="left:0;top:0" width="1920" height="1080" viewBox="0 0 1920 1080"><path d="M1651.9 156.2 L1688.2 156.2 L1688.2 138.0 L1723.7 173.5 L1688.2 209.5 L1688.2 191.7 L1651.9 191.7 Z" stroke="#333" stroke-width="1.3" fill="none" stroke-linejoin="miter" stroke-width="1.6"/><path d="M1736.0 155.9 L1789.4 155.9 L1808.0 173.5 L1789.4 191.7 L1736.0 191.7 Z" stroke="#333" stroke-width="1.3" fill="none" stroke-linejoin="miter" stroke-width="1.6"/><path d="M1820.6 152.0 L1873.5 152.0 L1892.8 173.5 L1873.5 195.2 L1820.6 195.2 L1839.2 173.5 Z" stroke="#333" stroke-width="1.3" fill="none" stroke-linejoin="miter" stroke-width="1.6"/><circle cx="1688.3" cy="286" r="36.2" stroke="#333" stroke-width="1.3" fill="none" stroke-linejoin="miter"/><circle cx="1688.3" cy="286" r="21.7" stroke="#333" stroke-width="1.3" fill="none" stroke-linejoin="miter"/><path d="M1753.5 249.3 L1789.9 249.3 L1789.9 267.5 L1808.4 267.5 L1808.4 304.0 L1789.9 304.0 L1789.9 322.0 L1753.5 322.0 L1753.5 304.0 L1735.7 304.0 L1735.7 267.5 L1753.5 267.5 Z" stroke="#333" stroke-width="1.3" fill="none" stroke-linejoin="miter" stroke-width="1.6"/><path d="M1848.7 279.1 L1848.7 265.4 L1841.9 265.4 L1855.6 249.8 L1869.3 265.4 L1862.5 265.4 L1862.5 279.1 L1876.2 279.1 L1876.2 272.3 L1891.8 286.0 L1876.2 299.7 L1876.2 292.9 L1862.5 292.9 L1862.5 306.6 L1869.3 306.6 L1855.6 322.2 L1841.9 306.6 L1848.7 306.6 L1848.7 292.9 L1835.0 292.9 L1835.0 299.7 L1819.4 286.0 L1835.0 272.3 L1835.0 279.1 Z" stroke="#333" stroke-width="1.3" fill="none" stroke-linejoin="miter"/><path d="M1651.7 398.0 L1666.3 383.7 L1666.3 390.3 L1709.7 390.3 L1709.7 383.7 L1723.7 398.0 L1709.7 412.5 L1709.7 405.3 L1666.3 405.3 L1666.3 412.5 Z" stroke="#333" stroke-width="1.3" fill="none" stroke-linejoin="miter"/><path d="M1772.4 363.4 L1781.1 390.3 L1809.4 390.3 L1786.5 406.9 L1795.3 433.8 L1772.4 417.2 L1749.5 433.8 L1758.3 406.9 L1735.4 390.3 L1763.7 390.3 Z" stroke="#333" stroke-width="1.3" fill="none" stroke-linejoin="miter"/><path d="M1855.6 430.9 L1827 400 Q1819.5 391 1819.7 384 Q1820 364 1838 364 Q1849 364 1855.6 377 Q1862 364 1874 364 Q1892.5 364 1892.6 384 Q1892.5 391 1884.5 400 Z" stroke="#333" stroke-width="1.3" fill="none" stroke-linejoin="miter"/><path d="M1723.8 512.5 L1723.6 510.5 L1723.4 508.5 L1723.1 506.5 L1722.6 504.6 L1722.1 502.7 L1721.5 500.8 L1720.8 499.0 L1719.9 497.2 L1719.0 495.4 L1718.0 493.7 L1716.9 492.1 L1715.8 490.5 L1714.5 489.0 L1713.2 487.5 L1711.8 486.2 L1710.3 484.9 L1708.8 483.7 L1707.2 482.5 L1705.6 481.5 L1703.9 480.5 L1702.2 479.7 L1700.4 478.9 L1698.6 478.2 L1696.8 477.7 L1695.0 477.2 L1693.1 476.8 L1691.2 476.5 L1689.3 476.3 L1687.4 476.3 L1685.5 476.3 L1683.6 476.4 L1681.7 476.6 L1679.9 476.9 L1678.0 477.3 L1676.2 477.8 L1674.5 478.4 L1672.7 479.1 L1671.0 479.9 L1669.4 480.7 L1667.8 481.7 L1666.2 482.7 L1664.7 483.8 L1663.3 485.0 L1661.9 486.2 L1660.6 487.5 L1659.4 488.9 L1658.3 490.3 L1657.2 491.8 L1656.2 493.4 L1655.3 494.9 L1654.5 496.6 L1653.8 498.2 L1653.2 499.9 L1652.6 501.7 L1652.2 503.4 L1651.8 505.2 L1651.5 506.9 L1651.4 508.7 L1651.3 510.5 L1651.3 512.3 L1651.4 514.1 L1651.6 515.8 L1651.9 517.6 L1652.3 519.3 L1652.7 521.0 L1653.3 522.7 L1653.9 524.3 L1654.7 525.9 L1655.5 527.5 L1656.4 529.0 L1657.3 530.5 L1658.4 531.9 L1659.5 533.2 L1660.6 534.5 L1661.9 535.7 L1663.2 536.8 L1664.5 537.9 L1665.9 538.9 L1667.3 539.8 L1668.8 540.7 L1670.4 541.4 L1671.9 542.1 L1673.5 542.7 L1675.1 543.2 L1676.8 543.7 L1678.4 544.0 L1680.1 544.3 L1681.8 544.4 L1683.4 544.5 L1685.1 544.5 L1686.8 544.4 L1688.4 544.2 L1690.1 543.9 L1691.7 543.6 L1693.3 543.1 L1694.9 542.6 L1696.4 542.0 L1697.9 541.3 L1699.4 540.6 L1700.8 539.7 L1702.1 538.8 L1703.4 537.9 L1704.7 536.8 L1705.9 535.7 L1707.0 534.6 L1708.1 533.4 L1709.1 532.1 L1710.1 530.8 L1710.9 529.5 L1711.7 528.1 L1712.4 526.6 L1713.1 525.2 L1713.6 523.7 L1714.1 522.2 L1714.5 520.7 L1714.8 519.1 L1715.1 517.5 L1715.2 516.0 L1715.3 514.4 L1715.3 512.9 L1715.2 511.3 L1715.0 509.7 L1714.7 508.2 L1714.4 506.7 L1714.0 505.2 L1713.5 503.8 L1712.9 502.3 L1712.3 500.9 L1711.6 499.6 L1710.8 498.2 L1710.0 497.0 L1709.1 495.8 L1708.1 494.6 L1707.1 493.5 L1706.0 492.4 L1704.9 491.4 L1703.7 490.5 L1702.5 489.6 L1701.3 488.8 L1700.0 488.1 L1698.6 487.4 L1697.3 486.8 L1695.9 486.3 L1694.5 485.8 L1693.1 485.5 L1691.6 485.2 L1690.2 485.0 L1688.7 484.8 L1687.3 484.7 L1685.8 484.8 L1684.4 484.8 L1682.9 485.0 L1681.5 485.2 L1680.1 485.6 L1678.7 485.9 L1677.4 486.4 L1676.0 486.9 L1674.7 487.5 L1673.5 488.2 L1672.3 488.9 L1671.1 489.7 L1669.9 490.5 L1668.9 491.4 L1667.8 492.3 L1666.8 493.3 L1665.9 494.4 L1665.0 495.5 L1664.2 496.6 L1663.5 497.8 L1662.8 499.0 L1662.2 500.2 L1661.7 501.4 L1661.2 502.7 L1660.8 504.0 L1660.4 505.3 L1660.2 506.7 L1660.0 508.0 L1659.8 509.4 L1659.8 510.7 L1659.8 512.0 L1659.9 513.4 L1660.0 514.7 L1660.2 516.0 L1660.5 517.3 L1660.9 518.6 L1661.3 519.8 L1661.8 521.1 L1662.3 522.3 L1662.9 523.4 L1663.6 524.6 L1664.3 525.6 L1665.1 526.7 L1665.9 527.7 L1666.8 528.6 L1667.7 529.5 L1668.7 530.4 L1669.7 531.2 L1670.7 531.9 L1671.8 532.6 L1672.9 533.2 L1674.0 533.8 L1675.2 534.3 L1676.4 534.7 L1677.6 535.1 L1678.8 535.4 L1680.0 535.7 L1681.2 535.8 L1682.4 536.0 L1683.7 536.0 L1684.9 536.0 L1686.1 535.9 L1687.4 535.8 L1688.6 535.6 L1689.7 535.3 L1690.9 535.0 L1692.1 534.6 L1693.2 534.2 L1694.3 533.6 L1695.3 533.1 L1696.4 532.5 L1697.4 531.8 L1698.3 531.1 L1699.2 530.4 L1700.1 529.6 L1700.9 528.7 L1701.7 527.8 L1702.4 526.9 L1703.1 526.0 L1703.7 525.0 L1704.3 524.0 L1704.8 522.9 L1705.2 521.9 L1705.6 520.8 L1706.0 519.7 L1706.3 518.6 L1706.5 517.5 L1706.6 516.4 L1706.7 515.3 L1706.8 514.1 L1706.8 513.0 L1706.7 511.9 L1706.6 510.8 L1706.4 509.7 L1706.1 508.6 L1705.8 507.5 L1705.5 506.5 L1705.1 505.5 L1704.6 504.5 L1704.1 503.5 L1703.6 502.6 L1703.0 501.7 L1702.3 500.8 L1701.6 500.0 L1700.9 499.2 L1700.1 498.5 L1699.3 497.8 L1698.5 497.1 L1697.6 496.5 L1696.7 496.0 L1695.8 495.5 L1694.9 495.0 L1693.9 494.6 L1693.0 494.2 L1692.0 493.9 L1691.0 493.7 L1690.0 493.5 L1689.0 493.4 L1687.9 493.3 L1686.9 493.2 L1685.9 493.2 L1684.9 493.3 L1683.9 493.4 L1682.9 493.6 L1682.0 493.8 L1681.0 494.1 L1680.1 494.4 L1679.2 494.8 L1678.3 495.2 L1677.4 495.7 L1676.6 496.2 L1675.8 496.7 L1675.0 497.3 L1674.3 497.9 L1673.6 498.6 L1672.9 499.3 L1672.3 500.0 L1671.7 500.7 L1671.2 501.5 L1670.7 502.3 L1670.2 503.1 L1669.8 504.0 L1669.4 504.8 L1669.1 505.7 L1668.9 506.6 L1668.6 507.5 L1668.5 508.4 L1668.3 509.3 L1668.3 510.2 L1668.2 511.1 L1668.3 512.0 L1668.3 512.9 L1668.4 513.8 L1668.6 514.6 L1668.8 515.5 L1669.1 516.4 L1669.4 517.2 L1669.7 518.0 L1670.1 518.8 L1670.5 519.5 L1670.9 520.3 L1671.4 521.0 L1671.9 521.7 L1672.5 522.3 L1673.1 522.9 L1673.7 523.5 L1674.3 524.1 L1675.0 524.6 L1675.7 525.0 L1676.4 525.5 L1677.1 525.9 L1677.9 526.2 L1678.6 526.5 L1679.4 526.8 L1680.2 527.0 L1680.9 527.2 L1681.7 527.4 L1682.5 527.5 L1683.3 527.5 L1684.1 527.5 L1684.9 527.5 L1685.7 527.4 L1686.5 527.3 L1687.2 527.2 L1688.0 527.0 L1688.7 526.8 L1689.4 526.5 L1690.2 526.2 L1690.8 525.9 L1691.5 525.5 L1692.1 525.1 L1692.8 524.7 L1693.3 524.2 L1693.9 523.8 L1694.4 523.2 L1694.9 522.7 L1695.4 522.1 L1695.8 521.6 L1696.2 521.0 L1696.6 520.3 L1696.9 519.7 L1697.2 519.1 L1697.5 518.4 L1697.7 517.7 L1697.9 517.1 L1698.1 516.4 L1698.2 515.7 L1698.3 515.0 L1698.3 514.3 L1698.3 513.6 L1698.3 513.0 L1698.2 512.3 L1698.1 511.6 L1698.0 511.0 L1697.8 510.3 L1697.6 509.7 L1697.4 509.1 L1697.1 508.5 L1696.8 507.9 L1696.5 507.3 L1696.2 506.8 L1695.8 506.3 L1695.4 505.8 L1695.0 505.3 L1694.5 504.9 L1694.1 504.4 L1693.6 504.1 L1693.1 503.7 L1692.6 503.4 L1692.1 503.1 L1691.5 502.8 L1691.0 502.5 L1690.4 502.3 L1689.8 502.1 L1689.3 502.0 L1688.7 501.9 L1688.1 501.8 L1687.5 501.7 L1687.0 501.7 L1686.4 501.7 L1685.8 501.7 L1685.3 501.8 L1684.7 501.9 L1684.2 502.0 L1683.6 502.2 L1683.1 502.3 L1682.6 502.5 L1682.1 502.8 L1681.6 503.0 L1681.2 503.3 L1680.7 503.6 L1680.3 503.9 L1679.9 504.2 L1679.5 504.6 L1679.1 505.0 L1678.8 505.4 L1678.5 505.8 L1678.2 506.2 L1677.9 506.6 L1677.7 507.0 L1677.5 507.5 L1677.3 507.9 L1677.1 508.4 L1677.0 508.9 L1676.9 509.3 L1676.8 509.8 L1676.7 510.3 L1676.7 510.8 L1676.7 511.2 L1676.7 511.7 L1676.8 512.1 L1676.8 512.6 L1676.9 513.0 L1677.0 513.5 L1677.1 513.9 L1677.3 514.3 L1677.5 514.7 L1677.7 515.1 L1677.9 515.5 L1678.1 515.8 L1678.4 516.2 L1678.6 516.5 L1678.9 516.8 L1679.2 517.1 L1679.5 517.4 L1679.8 517.6 L1680.1 517.9 L1680.5 518.1 L1680.8 518.3 L1681.2 518.5 L1681.5 518.6 L1681.9 518.7 L1682.2 518.9 L1682.6 518.9 L1683.0 519.0 L1683.3 519.1 L1683.7 519.1 L1684.1 519.1 L1684.4 519.1 L1684.8 519.1 L1685.1 519.0 L1685.5 519.0 L1685.8 518.9 L1686.1 518.8 L1686.4 518.7 L1686.7 518.5 L1687.0 518.4 L1687.3 518.2 L1687.6 518.1 L1687.8 517.9 L1688.1 517.7 L1688.3 517.5 L1688.5 517.2 L1688.7 517.0 L1688.9 516.8 L1689.1 516.5 L1689.2 516.3 L1689.4 516.0 L1689.5 515.8 L1689.6 515.5 L1689.7 515.3 L1689.8 515.0 L1689.8 514.7 L1689.9 514.5 L1689.9 514.2 L1689.9 513.9 L1689.9 513.7 L1689.9 513.4 L1689.9 513.2 L1689.9 512.9 L1689.8 512.7 L1689.7 512.5 L1689.7 512.3 L1689.6 512.0 L1689.5 511.8 L1689.4 511.6 L1689.2 511.5 L1689.1 511.3 L1689.0 511.1 L1688.8 510.9 L1688.7 510.8 L1688.5 510.7 L1688.4 510.5 L1688.2 510.4 L1688.1 510.3 L1687.9 510.2 L1687.7 510.2 L1687.5 510.1 L1687.4 510.1 L1687.2 510.0 L1687.0 510.0" stroke="#333" stroke-width="1.3" fill="none" stroke-linejoin="miter"/><path d="M1771.9 473.8 L1780.1 495.3 L1802.7 491.6 L1788.2 509.4 L1802.7 527.2 L1780.1 523.5 L1771.9 545.0 L1763.8 523.5 L1741.1 527.2 L1755.6 509.4 L1741.1 491.6 L1763.8 495.3 Z" stroke="#333" stroke-width="1.3" fill="none" stroke-linejoin="miter"/><path d="M1844.1 477.3 L1892.7 477.3 L1869 541.4 L1820.3 541.4 Z" stroke="#333" stroke-width="1.3" fill="none" stroke-linejoin="miter"/><circle cx="1687.9" cy="621.3" r="36.4" stroke="#333" stroke-width="1.3" fill="none" stroke-linejoin="miter"/><path d="M1667 612 A22 22 0 0 0 1697.1 642.1 Z" stroke="#333" stroke-width="1.3" fill="none" stroke-linejoin="miter"/><path d="M1679.3 601.6 A22 22 0 0 1 1707.5 630.6 Z" stroke="#333" stroke-width="1.3" fill="none" stroke-linejoin="miter"/><path d="M1736.1 640.3 A36.3 36.3 0 0 1 1808.7 640.3 H1793.9 A21.5 21.5 0 0 0 1750.9 640.3 Z" stroke="#333" stroke-width="1.3" fill="none" stroke-linejoin="miter"/><path d="M1870 588 L1839.1 590.3 L1824.8 603.9 L1820.2 621.7 L1824.8 639.4 L1839.1 653.1 L1870 655" stroke="#333" stroke-width="1.3" fill="none" stroke-linejoin="miter"/></svg><div class="abs" style="left:1640px;top:690px;width:263px;height:20px;background:#f0f0f0"></div><div class="abs" style="left:1641px;top:711px;width:279px;height:178px;background:#fff;border-left:1px solid #a0a0a0"></div><div class="abs" style="left:1641px;top:710px;width:279px;height:1px;background:#a0a0a0"></div><div class="abs" style="left:1642px;top:711px;width:278px;height:23px;background:#1c6fbf"></div><div class="abs" style="left:1751px;top:711px;width:1px;height:23px;background:#d0e0f0"></div><div class="abs" style="left:1806px;top:711px;width:1px;height:23px;background:#d0e0f0"></div><div class="abs" style="left:1642px;top:736px;width:109px;height:23px;background:#e4463c"></div><div class="abs" style="left:1752px;top:736px;width:168px;height:23px;background:#0b78d6"></div><div class="abs" style="left:1642px;top:759px;width:109px;height:24px;background:#000"></div><div class="abs" style="left:1642px;top:783px;width:278px;height:1px;background:#e4e4e4"></div><div class="abs" style="left:1642px;top:807px;width:278px;height:1px;background:#e4e4e4"></div><div class="abs" style="left:1642px;top:831px;width:278px;height:1px;background:#e4e4e4"></div><div class="abs" style="left:1642px;top:856px;width:278px;height:1px;background:#e4e4e4"></div><div class="abs" style="left:1642px;top:880px;width:278px;height:1px;background:#e4e4e4"></div><div class="abs" style="left:1751px;top:759px;width:1px;height:130px;background:#e4e4e4"></div><div class="abs" style="left:1806px;top:759px;width:1px;height:130px;background:#e4e4e4"></div><div class="abs" style="left:1806px;top:736px;width:1px;height:23px;background:#f0f0f0"></div><div class="t" style="left:1637px;width:120px;text-align:center;top:714px;font-size:15.6px;line-height:15.6px;color:#fff;">加工工艺</div><div class="t" style="left:1719px;width:120px;text-align:center;top:714px;font-size:15.6px;line-height:15.6px;color:#fff;">速度</div><div class="t" style="left:1820px;top:714px;font-size:15.6px;line-height:15.6px;color:#fff">功率</div><div class="t" style="left:1637px;width:120px;text-align:center;top:739.5px;font-size:15.6px;line-height:15.6px;color:#fff;">描线</div><div class="t" style="left:1759.5px;top:742px;font-size:16px;line-height:15px;color:#000;font-family:&quot;Liberation Mono&quot;,monospace;transform:scaleX(0.86);transform-origin:0 0">100.0</div><div class="t" style="left:1818px;top:742px;font-size:16px;line-height:15px;color:#000;font-family:&quot;Liberation Mono&quot;,monospace;transform:scaleX(0.86);transform-origin:0 0">15.00</div><div class="t" style="left:1637px;width:120px;text-align:center;top:763.5px;font-size:15.6px;line-height:15.6px;color:#fff;">切割</div><div class="t" style="left:1763.5px;top:766.5px;font-size:16px;line-height:15px;color:#000;font-family:&quot;Liberation Mono&quot;,monospace;transform:scaleX(0.86);transform-origin:0 0">40.0</div><div class="t" style="left:1818px;top:766.5px;font-size:16px;line-height:15px;color:#000;font-family:&quot;Liberation Mono&quot;,monospace;transform:scaleX(0.86);transform-origin:0 0">99.0</div><div class="abs" style="left:1684px;top:913.5px;width:61px;height:61px;border-radius:50%;background:#176cb8"></div><div class="t" style="left:1684px;top:926px;width:61px;text-align:center;font-size:18.5px;line-height:19px;color:#fff">模拟<br>造物</div><div class="abs" style="left:1780.7px;top:910.8px;width:97.4px;height:97.4px;border-radius:50%;background:#b5b5b5"></div><div class="abs" style="left:1785px;top:915px;width:89px;height:89px;border-radius:50%;background:#fff"></div><div class="abs" style="left:1789px;top:919px;width:81px;height:81px;border-radius:50%;background:linear-gradient(90deg,#b8b8b8,#a8a8a8)"></div><div class="t" style="left:1792px;top:937px;width:81px;text-align:center;font-size:22px;line-height:23.5px;font-weight:bold;color:#fff">开始<br>造物</div><svg style="left:3px;top:1025px" width="5" height="28"><path d="M0.5 0V8M3.5 0V8M0.5 10V18M3.5 10V18M0.5 20V28M3.5 20V28" stroke="#a0a8c0" stroke-width="1"/></svg><div class="abs" style="left:11px;top:1023px;width:30px;height:30px;background:#a7aec4"></div><div class="abs" style="left:13px;top:1025px;width:26px;height:26px;background:#bdbdbd"></div><div class="abs" style="left:16px;top:1028px;width:20px;height:20px;background:#000;border:1px solid #3a3a3a"></div><div class="abs" style="left:46px;top:1026px;width:24px;height:24px;background:#bdbdbd"></div><div class="abs" style="left:48px;top:1028px;width:20px;height:20px;background:#e4463c;border:1px solid #3a3a3a"></div><div class="abs" style="left:78px;top:1026px;width:24px;height:24px;background:#bdbdbd"></div><div class="abs" style="left:80px;top:1028px;width:20px;height:20px;background:#ffa910;border:1px solid #3a3a3a"></div><div class="abs" style="left:110px;top:1026px;width:24px;height:24px;background:#bdbdbd"></div><div class="abs" style="left:112px;top:1028px;width:20px;height:20px;background:#4a82ee;border:1px solid #3a3a3a"></div><div class="abs" style="left:142px;top:1026px;width:24px;height:24px;background:#bdbdbd"></div><div class="abs" style="left:144px;top:1028px;width:20px;height:20px;border:1px solid #3a3a3a;background:linear-gradient(#e4463c,#e4463c) 0 0/9px 9px no-repeat,linear-gradient(#ffa910,#ffa910) 9px 0/10px 9px no-repeat,linear-gradient(#4a82ee,#4a82ee) 0 9px/9px 10px no-repeat,linear-gradient(#5a9e30,#5a9e30) 9px 9px/10px 10px no-repeat"></div><svg style="left:9px;top:1060px" width="16" height="16"><path d="M3.5 1V15M1 12.5H15" stroke="#000" stroke-width="2"/></svg><div class="t" style="left:29px;top:1063px;font-size:11px;line-height:11px;color:#000;letter-spacing:-0.35px">XY(438.72, 293.36)</div><div class="t" style="left:1758px;top:1060px;font-size:13px;line-height:13px;color:#000">连接方式</div><div class="abs" style="left:1839px;top:1061px;width:14px;height:14px;border-radius:50%;background:#777"></div><div class="t" style="left:1858px;top:1060px;font-size:13px;line-height:13px;color:#000">断开</div><svg style="left:1500px;top:383px" width="215" height="74" viewBox="0 0 215 74">
<path d="M37.7 10 H184 A26 26 0 0 1 184 62 H37.7 Z" fill="#a2c0dc" opacity="0.6"/>
<circle cx="37.7" cy="36.6" r="33" fill="#71baef" opacity="0.6"/>
<path d="M45 36.6 H208" stroke="#ffffff" stroke-width="0.8" opacity="0.35"/>
<path d="M27 43 Q19 43 19 35 Q19 28 26 27.5 Q28 17 38 17 Q48 17 50 27 Q57 28 57 35.5 Q57 43 49 43 Z" fill="#e6e6e6" opacity="0.95"/>
<path d="M33 41 Q31 33 40 29 L39 26 L45 31 L40 35 L40 32 Q35 34 35 41 Z" fill="#9cc6e4"/>
</svg><div class="t" style="left:1523px;top:432px;font-size:10.5px;line-height:10px;color:#f4f4f4;opacity:0.9">已登录</div><div class="t" style="left:1580px;top:401px;font-size:12px;line-height:12px;color:#fff;opacity:0.75">课堂评价</div><div class="t" style="left:1648px;top:401px;font-size:12px;line-height:12px;color:#fff;opacity:0.6">下课</div><div class="t" style="left:1586px;top:427px;font-size:12px;line-height:12px;color:#fff;opacity:0.75">计时器</div><div class="t" style="left:1645px;top:427px;font-size:12px;line-height:12px;color:#fff;opacity:0.75">分组管理</div><div class="abs" style="left:1840px;top:525px;width:90px;height:530px;background:#fff;border-radius:6px 0 0 6px;box-shadow:-3px 3px 10px rgba(0,0,0,0.18)"></div><svg style="left:1850px;top:535px" width="60" height="60" viewBox="0 0 60 60">
<path d="M22 43.9 H38.3 L40 49.7 H20 Z" fill="#4a86d8"/>
<path d="M11.9 40 V37.5 Q11.9 36.1 13.5 36.1 H44.5 Q46.1 36.1 46.1 37.5 V40 Z" fill="#ffb428"/>
<rect x="6.1" y="11.9" width="47.8" height="30.1" rx="3" fill="none" stroke="#e01010" stroke-width="3.9"/>
<circle cx="10.8" cy="16.9" r="2" fill="#e01010"/><circle cx="13.9" cy="16.9" r="2" fill="#ffb428"/><circle cx="16.9" cy="16.9" r="2" fill="#2bb38a"/>
</svg><svg style="left:1850px;top:600px" width="60" height="60" viewBox="0 0 60 60">
<defs><linearGradient id="cy" x1="0" y1="0" x2="0" y2="1"><stop offset="0" stop-color="#ffd840"/><stop offset="1" stop-color="#ff9a18"/></linearGradient>
<linearGradient id="cy2" x1="0" y1="0" x2="1" y2="0"><stop offset="0" stop-color="#ff8a10"/><stop offset="1" stop-color="#ffb030"/></linearGradient></defs>
<rect x="16" y="16" width="28" height="28" fill="#f8f8f8"/>
<path d="M15.8 9 H50.5 V44 H44 V16 H15.8 Z" fill="url(#cy)" stroke="#000" stroke-width="2" stroke-linejoin="round"/>
<path d="M44 16 H50.5 V44 H44 Z" fill="url(#cy2)"/>
<path d="M50.5 9 V40 M15.8 9 H50.5 M44 16 V36" stroke="#000" stroke-width="2" fill="none"/>
<rect x="5" y="9.5" width="4.2" height="6.5" fill="#ffb020" stroke="#000" stroke-width="2"/>
<rect x="44" y="50" width="6.5" height="5" fill="#ff9a10" stroke="#000" stroke-width="2"/>
<path d="M9.2 5 H15.8 V44 H55 V50 H9.2 Z" fill="#2ab8f5" stroke="#000" stroke-width="2" stroke-linejoin="round"/>
<path d="M5.5 54 L54.5 5.5" stroke="#000" stroke-width="2.3" stroke-linecap="round"/>
</svg><svg style="left:1850px;top:665px" width="60" height="60" viewBox="0 0 60 60">
<path d="M16.4 4.4 L29.7 21.7 L23.3 29.8 Q16 17 15.5 13 Z" fill="#d6d6d6"/>
<path d="M43.6 4.2 Q45 12 42.5 19 L36.6 30.5 Q35 36 30 38.5 H26.5 L20.6 33.8 L29.7 21.7 Z" fill="#d6d6d6"/>
<path d="M20.6 33.8 L26.5 39.8 L21 44 L15.5 39 Z" fill="#ec6e4e"/>
<path d="M39.3 34.4 L44.5 39.5 L39 44 L33.5 39.7 Z" fill="#ec6e4e"/>
<circle cx="15.6" cy="46.6" r="8.9" fill="#ec6e4e"/><circle cx="44.7" cy="47" r="8.9" fill="#ec6e4e"/>
<circle cx="30.5" cy="31.7" r="1.3" fill="#9a9a9a"/>
</svg><svg style="left:1850px;top:730px" width="60" height="60" viewBox="0 0 60 60">
<defs><clipPath id="cb"><path d="M12.2 15.8 H17.5 L20 10.5 Q21 9 23 9 H37 Q39 9 40 10.5 L42 15.8 H47.8 Q52.8 15.8 52.8 20.8 V45.8 Q52.8 50.8 47.8 50.8 H12.2 Q7.2 50.8 7.2 45.8 V20.8 Q7.2 15.8 12.2 15.8 Z"/></clipPath></defs>
<g clip-path="url(#cb)">
<rect x="0" y="0" width="60" height="60" fill="#ffa56a"/>
<circle cx="45" cy="40" r="29" fill="#ff9450"/>
<circle cx="52" cy="47" r="25" fill="#ff7e3a"/>
<circle cx="60" cy="54" r="22" fill="#ff6e2e"/>
</g>
<circle cx="30" cy="30" r="7" fill="#fff"/>
<circle cx="13.5" cy="21.5" r="2.5" fill="#fff"/>
<rect x="43" y="19.5" width="6.2" height="3" rx="1.5" fill="#fff"/>
</svg><svg style="left:1850px;top:795px" width="60" height="60" viewBox="0 0 60 60">
<defs><clipPath id="vb"><rect x="4.2" y="21.7" width="38.8" height="29.7" rx="5"/></clipPath></defs>
<circle cx="15.6" cy="17.6" r="9.8" fill="#34e87a"/><circle cx="31.6" cy="17.6" r="9.8" fill="#34e87a"/>
<rect x="4.2" y="21.7" width="38.8" height="29.7" rx="5" fill="#f53cb5"/>
<g clip-path="url(#vb)"><circle cx="15.6" cy="17.6" r="9.8" fill="#d81b8a"/><circle cx="31.6" cy="17.6" r="9.8" fill="#d81b8a"/></g>
<path d="M42 31 L51.5 25.5 Q55 24 55 28 V44 Q55 48 51.5 46.5 L42 41.5 Z" fill="#f53cb5"/>
<path d="M19.4 32.5 Q19.4 31 20.8 31.7 L30.5 36.8 Q31.5 37.4 30.5 38 L20.8 42.8 Q19.4 43.5 19.4 42 Z" fill="#fff"/>
</svg><svg style="left:1850px;top:860px" width="60" height="60" viewBox="0 0 60 60">
<rect x="9.3" y="11.8" width="42" height="27.5" rx="2.5" fill="none" stroke="#1890dc" stroke-width="3"/>
<path d="M30 40 V47 M22.5 47.8 H37.5" stroke="#1890dc" stroke-width="3" stroke-linecap="round"/>
<path d="M21 31.5 Q23 25 31.5 23 V20 L39 25.7 L31.5 31.5 V28.5 Q25 28 21 31.5 Z" fill="#1890dc" stroke="#1890dc" stroke-width="1" stroke-linejoin="round"/>
</svg><svg style="left:1848px;top:922px" width="64" height="64" viewBox="0 0 64 64">
<path d="M20.5 14.8 H41.5 V7.7 L56.3 23.7 L41.5 40.9 V33.2 H21.9 V26.1 L7.1 42.1 L21.9 58.1 V51 H39.7" stroke="#e41c24" stroke-width="4" fill="none" stroke-linecap="round" stroke-linejoin="round"/>
</svg><svg style="left:1850px;top:990px" width="60" height="60" viewBox="0 0 60 60">
<path d="M12 8.3 H41 Q45.5 8.3 45.5 13 V19.5 M45.5 33.5 V39 Q45.5 44 41 44 H37" stroke="#d81e06" stroke-width="2.3" fill="none" stroke-linecap="round"/>
<path d="M12 7.5 H21 L35 14 Q37 15 37 17.5 V52 Q37 55.5 34 54.5 L12.5 45 Q10 44 10 42 V10 Q10 7.5 12 7.5 Z" fill="#d81e06"/>
<path d="M39.5 27 H46" stroke="#b01020" stroke-width="2" stroke-linecap="round"/><path d="M45 23.5 L50 26.8 L45 30 Z" fill="#b01020"/>
</svg></body></html>
